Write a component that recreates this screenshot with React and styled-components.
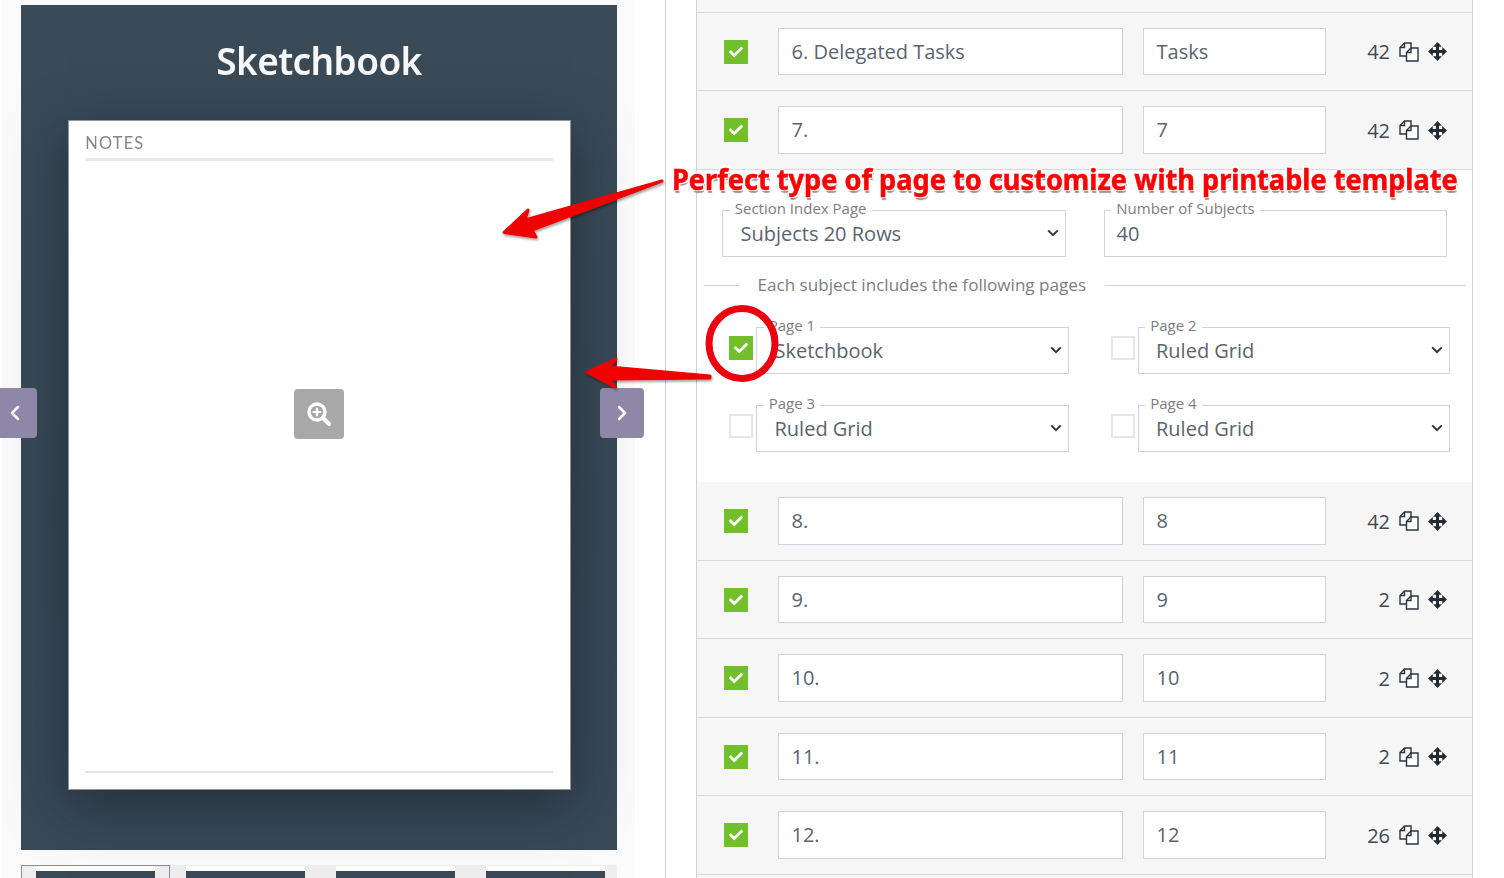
import React from "react";
import styled, { createGlobalStyle } from "styled-components";
import { ChevronLeft, ChevronRight } from "lucide-react";
import { FaCheck } from "react-icons/fa";

const Global = createGlobalStyle`
  html, body { margin: 0; padding: 0; background: #fff; }
  * { box-sizing: border-box; }
  body { font-family: "Open Sans", "Noto Sans", sans-serif; color: #495057; }
`;

const Page = styled.div`
  position: relative;
  width: 1504px;
  height: 878px;
  overflow: hidden;
  display: flex;
  background: #fff;
`;

const LeftColumn = styled.div`
  width: 666px;
  height: 878px;
  padding-left: 2px;
  border-right: 1px solid #ced1dc;
  flex: none;
`;

const Gallery = styled.div`
  position: relative;
  width: 633px;
  height: 878px;
  padding: 5px 18px 0 19px;
  background: #fafafa;
`;

const Cover = styled.div`
  position: relative;
  height: 845px;
  padding: 0 46.5px;
  background: linear-gradient(180deg, #3a4a57 0%, #384854 60%, #394957 100%);
`;

const Title = styled.h1`
  margin: 0;
  height: 114.75px;
  padding-top: 30px;
  text-align: center;
  color: #f6f7f8;
  font: 600 37px/52px "Noto Sans", sans-serif;
  letter-spacing: -0.6px;
  filter: blur(0.4px);
`;

const Sheet = styled.div`
  display: flex;
  flex-direction: column;
  height: 670px;
  padding: 12px 17px 16px 16.75px;
  background: #fff;
  border: 1px solid #8b959c;
  box-shadow: 0 14px 52px rgba(18, 26, 32, 0.55);
`;

const SheetLabel = styled.div`
  color: #858585;
  font: 400 16.4px/20px "Lato", sans-serif;
  letter-spacing: 1.2px;
  padding-bottom: 5px;
  border-bottom: 3px solid #e9e9e9;
  filter: blur(0.3px);
`;

const SheetFoot = styled.div`
  margin-top: auto;
  border-bottom: 2px solid #e2e2e2;
`;

const ZoomButton = styled.div`
  position: absolute;
  left: 273px;
  top: 384px;
  width: 50px;
  height: 50px;
  display: flex;
  align-items: center;
  justify-content: center;
  border-radius: 4px;
  background: #a8a8a8;
`;

const NavButton = styled.div`
  position: absolute;
  top: 388px;
  height: 50px;
  display: flex;
  align-items: center;
  justify-content: center;
  color: #fff;
  background: #8f87a8;
  ${(p) =>
    p.$side === "left"
      ? "left: -2px; width: 37px; padding-right: 8px; border-radius: 0 4px 4px 0;"
      : "left: 598px; width: 44px; border-radius: 4px;"}
`;

const Thumbs = styled.div`
  display: flex;
  gap: 1px;
  height: 13px;
  margin-top: 15px;
  overflow: hidden;
  background: #eee;
`;

const Thumb = styled.div`
  width: 149px;
  flex: none;
  padding: 0 14px;
  border: 1px solid ${(p) => (p.$active ? "#8f87a8" : "transparent")};
  border-bottom: 0;
  &::before {
    content: "";
    display: block;
    height: 12px;
    background: #394957;
    border-top: 5px solid #fff;
  }
`;

const Right = styled.div`
  margin-left: 30px;
  width: 777px;
  height: 878px;
  border-left: 1px solid #ced1dc;
  border-right: 1px solid #ced1dc;
  flex: none;
`;

const TopStrip = styled.div`
  height: 11.75px;
  background: #f6f6f6;
`;

const Row = styled.div`
  display: flex;
  align-items: center;
  height: 78.5px;
  padding: 0 0 0 27.25px;
  background: #f6f6f6;
  border-top: 1px solid ${(p) => (p.$plain ? "#fff" : "#d8d9de")};
`;

const CheckBox = styled.span`
  width: 24px;
  height: 24px;
  flex: none;
  display: inline-flex;
  align-items: center;
  justify-content: center;
  color: #fff;
  font-size: 14px;
  background: ${(p) => (p.$on ? "#72bf2c" : "#fff")};
  border: ${(p) => (p.$on ? "0" : "2px solid #e6e6e6")};
`;

const TextInput = styled.div`
  height: 47.5px;
  width: ${(p) => p.$w}px;
  margin-left: ${(p) => p.$ml}px;
  flex: none;
  padding-left: 12.5px;
  background: #fff;
  border: 1px solid #ced4da;
  font-size: 20px;
  line-height: 45px;
  color: #5a6470;
`;

const Count = styled.span`
  width: 64px;
  flex: none;
  text-align: right;
  font-size: 20px;
  color: #3f4852;
`;

const IconSlot = styled.span`
  display: inline-flex;
  margin-left: ${(p) => p.$ml}px;
  color: #2a3440;
`;

const Section = styled.div`
  height: 312.5px;
  padding-top: 29.5px;
  background: #fff;
  border-top: 1px solid #d8d9de;
`;

const FieldRow = styled.div`
  display: flex;
  gap: 37.5px;
  margin-left: 25px;
`;

const Field = styled.fieldset`
  margin: 0;
  min-width: 0;
  width: ${(p) => p.$w}px;
  height: 57.5px;
  padding: 0;
  border: 1px solid #ced4da;
`;

const Legend = styled.legend`
  margin-left: 6.75px;
  padding: 0 5px 4px;
  font-size: 15px;
  line-height: 18px;
  color: #7d7d7d;
`;

const chevron = encodeURIComponent(
  '<svg xmlns="http://www.w3.org/2000/svg" width="12" height="8" viewBox="0 0 12 8"><path d="M1.2 1.4 6 6.2l4.8-4.8" fill="none" stroke="#2f3640" stroke-width="2"/></svg>'
);

const Select = styled.select`
  display: block;
  appearance: none;
  width: 100%;
  height: 30px;
  margin-top: -3px;
  padding: 0 26px 0 17.5px;
  border: 0;
  outline: 0;
  background: transparent url("data:image/svg+xml,${chevron}") no-repeat right 6px center;
  font: 400 20px "Open Sans", sans-serif;
  color: #5a6470;
`;

const NumberValue = styled.div`
  padding-left: 12px;
  font-size: 20px;
  line-height: 26px;
  color: #5a6470;
`;

const Divider = styled.div`
  display: flex;
  align-items: center;
  gap: 18.5px;
  margin: 16px 6px 19.5px 7px;
  font-size: 17.1px;
  line-height: 24px;
  color: #7d7d7d;
  &::before {
    content: "";
    width: 35px;
    margin-top: 2px;
    border-top: 1px solid #ced1d6;
  }
  &::after {
    content: "";
    flex: 1;
    margin-top: 2px;
    border-top: 1px solid #ced1d6;
  }
`;

const PageGrid = styled.div`
  display: grid;
  grid-template-columns: 340px 339.5px;
  column-gap: 41.5px;
  row-gap: 20.5px;
  margin-left: 32px;
`;

const PageCell = styled.div`
  display: flex;
  align-items: center;
  justify-content: space-between;
  & > span {
    margin-top: 6px;
  }
`;

const Overlay = styled.svg`
  position: absolute;
  left: 0;
  top: 0;
  width: 1504px;
  height: 878px;
  pointer-events: none;
`;

const Callout = styled.div`
  position: absolute;
  left: 672px;
  top: 159px;
  white-space: nowrap;
  transform-origin: left center;
  transform: scaleX(0.97);
  font: 700 28px/40px "Noto Sans", sans-serif;
  color: #ff0000;
  -webkit-text-stroke: 0.5px #ff0000;
  text-shadow: 1px 0 0 #fff, -1px 0 0 #fff, 0 1px 0 #fff, 0 -1px 0 #fff,
    2px 1px 0 #fff, -2px 1px 0 #fff, 1px -2px 0 #fff, -1px -2px 0 #fff,
    1px 3px 1px #999;
`;

const CopyIcon = () => (
  <svg width="20" height="20" viewBox="0 0 20 20" fill="none" stroke="#2a3440" strokeWidth="1.4">
    <path d="M7.5 14H1V5.5L5.5 1H12V6" />
    <path d="M1 5.5H5.5V1" />
    <path d="M7.5 19V10.5L12 6H19V19Z" fill="#fff" />
    <path d="M7.5 10.5H12V6" />
  </svg>
);

const MoveIcon = () => (
  <svg width="19" height="19" viewBox="0 0 19 19" fill="#232c36">
    <path d="M8 3.5h3v4.5h4.5v3H11v4.5H8V11H3.5V8H8z" />
    <path d="M9.5 0l4.4 4.8H5.100zM9.5 19l-4.400-4.800h8.800zM0 9.5l4.800-4.400v8.800zM19 9.500l-4.800 4.400V5.100z" />
  </svg>
);

const ZoomGlyph = () => (
  <svg width="26" height="26" viewBox="0 0 26 26" fill="none" stroke="#fff" strokeLinecap="round">
    <circle cx="11" cy="11" r="8" strokeWidth="3.4" />
    <path d="M17 17l6 6" strokeWidth="4" />
    <path d="M11 7.5v7M7.5 11h7" strokeWidth="2.2" />
  </svg>
);

const rows = (list, plainFirst) =>
  list.map(([title, short, n], i) => (
    <Row key={title} $plain={plainFirst && i === 0}>
      <CheckBox $on>
        <FaCheck />
      </CheckBox>
      <TextInput $w={345} $ml={29.75}>{title}</TextInput>
      <TextInput $w={183} $ml={20}>{short}</TextInput>
      <Count>{n}</Count>
      <IconSlot $ml={9}><CopyIcon /></IconSlot>
      <IconSlot $ml={9}><MoveIcon /></IconSlot>
    </Row>
  ));

const PageField = ({ label, value, on, w }) => (
  <PageCell>
    <CheckBox $on={on}>{on && <FaCheck />}</CheckBox>
    <Field $w={w}>
      <Legend>{label}</Legend>
      <Select defaultValue={value}>
        <option>{value}</option>
      </Select>
    </Field>
  </PageCell>
);

export default function App() {
  return (
    <Page>
      <Global />
      <LeftColumn>
        <Gallery>
          <Cover>
            <Title>Sketchbook</Title>
            <Sheet>
              <SheetLabel>NOTES</SheetLabel>
              <SheetFoot />
            </Sheet>
            <ZoomButton><ZoomGlyph /></ZoomButton>
          </Cover>
          <NavButton $side="left"><ChevronLeft size={24} strokeWidth={2.5} /></NavButton>
          <NavButton $side="right"><ChevronRight size={24} strokeWidth={2.5} /></NavButton>
          <Thumbs>
            <Thumb $active />
            <Thumb />
            <Thumb />
            <Thumb />
          </Thumbs>
        </Gallery>
      </LeftColumn>
      <Right>
        <TopStrip />
        {rows([
          ["6. Delegated Tasks", "Tasks", 42],
          ["7.", "7", 42],
        ])}
        <Section>
          <FieldRow>
            <Field $w={344}>
              <Legend>Section Index Page</Legend>
              <Select defaultValue="Subjects 20 Rows">
                <option>Subjects 20 Rows</option>
              </Select>
            </Field>
            <Field $w={343.5}>
              <Legend>Number of Subjects</Legend>
              <NumberValue>40</NumberValue>
            </Field>
          </FieldRow>
          <Divider>Each subject includes the following pages</Divider>
          <PageGrid>
            <PageField label="Page 1" value="Sketchbook" on w={313} />
            <PageField label="Page 2" value="Ruled Grid" w={312.5} />
            <PageField label="Page 3" value="Ruled Grid" w={313} />
            <PageField label="Page 4" value="Ruled Grid" w={312.5} />
          </PageGrid>
        </Section>
        {rows(
          [
            ["8.", "8", 42],
            ["9.", "9", 2],
            ["10.", "10", 2],
            ["11.", "11", 2],
            ["12.", "12", 26],
          ],
          true
        )}
        <Row />
      </Right>
      <Overlay viewBox="0 0 1504 878">
        <defs>
          <filter id="arrowShadow" x="-10%" y="-30%" width="120%" height="160%">
            <feDropShadow dx="1" dy="2" stdDeviation="1" floodColor="#000" floodOpacity="0.35" />
          </filter>
        </defs>
        <g fill="#f00000" stroke="#f00000" strokeWidth="3" strokeLinejoin="round" filter="url(#arrowShadow)">
          <path d="M662 181 L525 220 L528 210 L504 232.5 L536 237 L532 230 Z" />
          <path d="M710 376 L609 367 L616 359 L587 372 L615 387 L609 379 L710 378 Z" />
        </g>
        <ellipse cx="742" cy="343.5" rx="33" ry="35" fill="none" stroke="#ec0010" strokeWidth="7" />
      </Overlay>
      <Callout>Perfect type of page to customize with printable template</Callout>
    </Page>
  );
}
